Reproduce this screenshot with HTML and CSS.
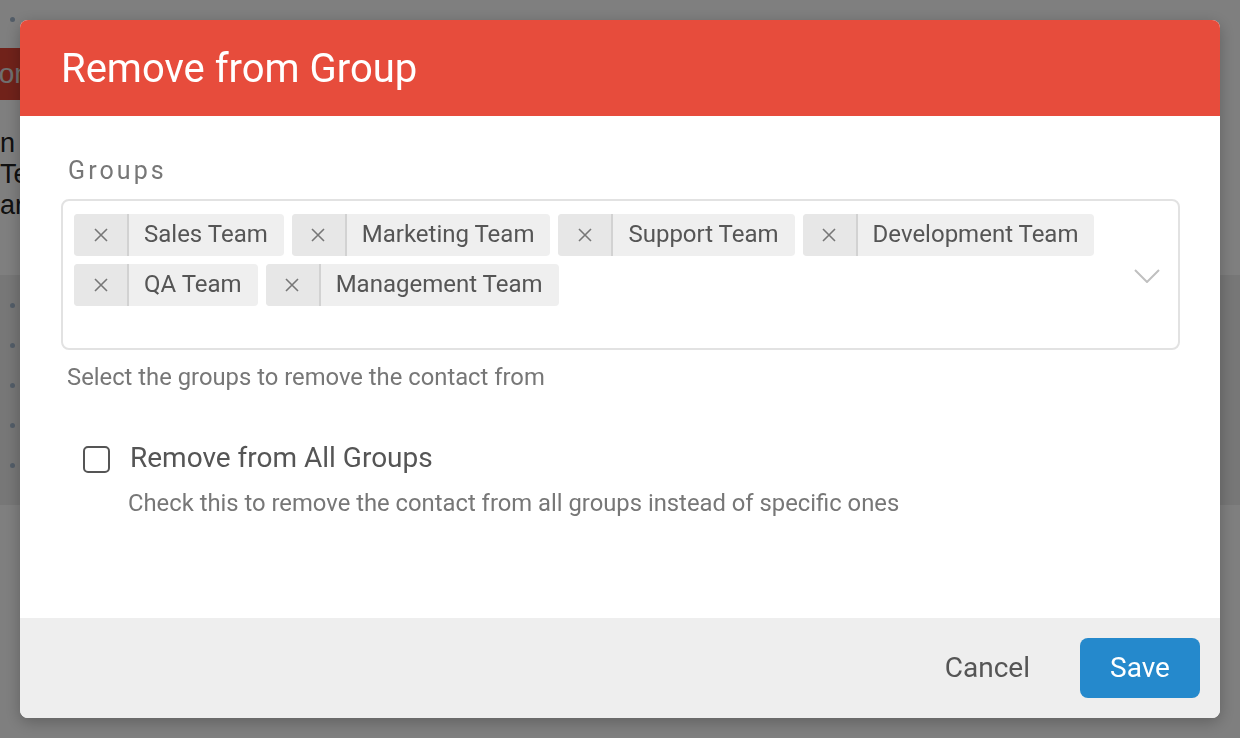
FILE: index.html
```html
<!DOCTYPE html>
<html lang="en">
<head>
<meta charset="utf-8">
<title>Remove from Group</title>
<link rel="stylesheet" href="styles.css">
</head>
<body>
<div class="page">
  <div class="page-top">
    <div class="card">
      <span class="dot dot-top"></span>
      <button class="bg-button">Action</button>
      <div class="bg-lines">
        <div>n</div>
        <div>Team</div>
        <div>ar</div>
      </div>
    </div>
    <div class="rows">
      <div class="row"><span class="dot"></span></div>
      <div class="row"><span class="dot"></span></div>
      <div class="row"><span class="dot"></span></div>
      <div class="row"><span class="dot"></span></div>
      <div class="row"><span class="dot"></span></div>
    </div>
  </div>
  <div class="page-bottom"></div>
</div>

<div class="overlay">
  <div class="modal" role="dialog">
    <div class="modal-header">
      <h2 class="modal-title">Remove from Group</h2>
    </div>
    <div class="modal-body">
      <div class="field-label">Groups</div>
      <div class="select">
        <div class="tags">
          <div class="tag"><span class="tag-x"><svg width="14" height="14" viewBox="0 0 14 14"><path d="M1 1L13 13M13 1L1 13" stroke="#777" stroke-width="1.6" fill="none"/></svg></span><span class="tag-label">Sales Team</span></div>
          <div class="tag"><span class="tag-x"><svg width="14" height="14" viewBox="0 0 14 14"><path d="M1 1L13 13M13 1L1 13" stroke="#777" stroke-width="1.6" fill="none"/></svg></span><span class="tag-label">Marketing Team</span></div>
          <div class="tag"><span class="tag-x"><svg width="14" height="14" viewBox="0 0 14 14"><path d="M1 1L13 13M13 1L1 13" stroke="#777" stroke-width="1.6" fill="none"/></svg></span><span class="tag-label">Support Team</span></div>
          <div class="tag"><span class="tag-x"><svg width="14" height="14" viewBox="0 0 14 14"><path d="M1 1L13 13M13 1L1 13" stroke="#777" stroke-width="1.6" fill="none"/></svg></span><span class="tag-label">Development Team</span></div>
          <div class="tag"><span class="tag-x"><svg width="14" height="14" viewBox="0 0 14 14"><path d="M1 1L13 13M13 1L1 13" stroke="#777" stroke-width="1.6" fill="none"/></svg></span><span class="tag-label">QA Team</span></div>
          <div class="tag"><span class="tag-x"><svg width="14" height="14" viewBox="0 0 14 14"><path d="M1 1L13 13M13 1L1 13" stroke="#777" stroke-width="1.6" fill="none"/></svg></span><span class="tag-label">Management Team</span></div>
        </div>
        <svg class="chevron" width="26" height="14" viewBox="0 0 26 14"><path d="M1 1L13 13L25 1" stroke="#c0c0c0" stroke-width="2" fill="none"/></svg>
      </div>
      <div class="help">Select the groups to remove the contact from</div>
      <label class="check-row">
        <span class="checkbox"></span>
        <span class="check-label">Remove from All Groups</span>
      </label>
      <div class="check-help">Check this to remove the contact from all groups instead of specific ones</div>
    </div>
    <div class="modal-footer">
      <button class="btn btn-cancel">Cancel</button>
      <button class="btn btn-save">Save</button>
    </div>
  </div>
</div>
</body>
</html>
```

FILE: styles.css
```css
html, body {
  margin: 0;
  padding: 0;
  width: 1240px;
  height: 738px;
  overflow: hidden;
  font-family: Roboto, "Liberation Sans", sans-serif;
}

/* background page */
.page {
  height: 738px;
  background: #ffffff;
}
.page-top {
  height: 505px;
  background: #eeeeee;
}
.card {
  height: 275px;
  background: #ffffff;
  box-sizing: border-box;
  padding-top: 48px;
  position: relative;
  font-family: "Liberation Sans", Arial, sans-serif;
}
.dot {
  display: block;
  width: 5px;
  height: 5px;
  border-radius: 50%;
  background: #a6bad0;
  margin-left: 10px;
}
.dot-top {
  position: absolute;
  left: 0;
  top: 17px;
}
.bg-button {
  display: block;
  height: 52px;
  margin-left: -62px;
  padding: 0 14px;
  border: 0;
  background: #e24535;
  color: #e0e0e0;
  font: 400 28px "Liberation Sans", Arial, sans-serif;
}
.bg-lines {
  margin-top: 28px;
  font-size: 27px;
  line-height: 31px;
  color: #222;
}
.rows {
  padding-top: 28px;
}
.row {
  height: 40px;
}

/* overlay + modal */
.overlay {
  position: fixed;
  inset: 0;
  background: rgba(0, 0, 0, 0.5);
  display: flex;
  align-items: center;
  justify-content: center;
}
.modal {
  width: 1200px;
  height: 698px;
  background: #ffffff;
  border-radius: 8px;
  overflow: hidden;
  display: flex;
  flex-direction: column;
  box-shadow: 0 4px 16px rgba(0, 0, 0, 0.25);
}
.modal-header {
  height: 96px;
  flex: none;
  background: #e74c3c;
  display: flex;
  align-items: center;
  padding: 0 41px;
}
.modal-title {
  margin: 0;
  font-weight: 400;
  font-size: 40px;
  color: #ffffff;
}
.modal-body {
  flex: 1;
  padding: 40px 40px 0 41px;
}
.field-label {
  font-size: 25px;
  letter-spacing: 3.1px;
  color: #777777;
  line-height: 30px;
  margin-left: 7px;
  margin-bottom: 13px;
}
.select {
  height: 151px;
  box-sizing: border-box;
  border: 2px solid #e2e2e2;
  border-radius: 8px;
  padding: 13px 18px 13px 11px;
  display: flex;
  align-items: center;
}
.tags {
  flex: 1;
  align-self: flex-start;
  display: flex;
  flex-wrap: wrap;
  gap: 8px;
}
.tag {
  display: flex;
  height: 42px;
  background: #efefef;
  border-radius: 4px;
  overflow: hidden;
}
.tag-x {
  width: 53px;
  display: flex;
  align-items: center;
  justify-content: center;
  background: #e7e7e7;
  border-right: 2px solid #d2d2d2;
}
.tag-label {
  padding: 0 16px 0 15px;
  line-height: 41px;
  font-size: 24px;
  color: #555555;
}
.chevron {
  flex: none;
  margin-top: 2px;
}
.help {
  margin: 13px 0 0 6px;
  font-size: 23.8px;
  line-height: 28px;
  color: #777777;
}
.check-row {
  display: flex;
  align-items: center;
  gap: 20px;
  margin: 51px 0 0 22px;
}
.checkbox {
  width: 27px;
  height: 27px;
  box-sizing: border-box;
  border: 2.5px solid #555555;
  border-radius: 5px;
  margin-top: 3px;
}
.check-label {
  font-size: 28px;
  color: #555555;
  line-height: 32px;
}
.check-help {
  margin: 15px 0 0 67px;
  font-size: 23.8px;
  line-height: 28px;
  color: #777777;
}
.modal-footer {
  height: 100px;
  flex: none;
  box-sizing: border-box;
  background: #eeeeee;
  padding: 20px;
  display: flex;
  justify-content: flex-end;
  align-items: center;
  gap: 24px;
}
.btn {
  height: 60px;
  border: 0;
  border-radius: 8px;
  font-family: Roboto, "Liberation Sans", sans-serif;
  font-size: 28px;
  line-height: 56px;
  cursor: pointer;
}
.btn-cancel {
  background: transparent;
  color: #555555;
  padding: 0 26px;
}
.btn-save {
  width: 120px;
  background: #2589cc;
  color: #ffffff;
}
```
